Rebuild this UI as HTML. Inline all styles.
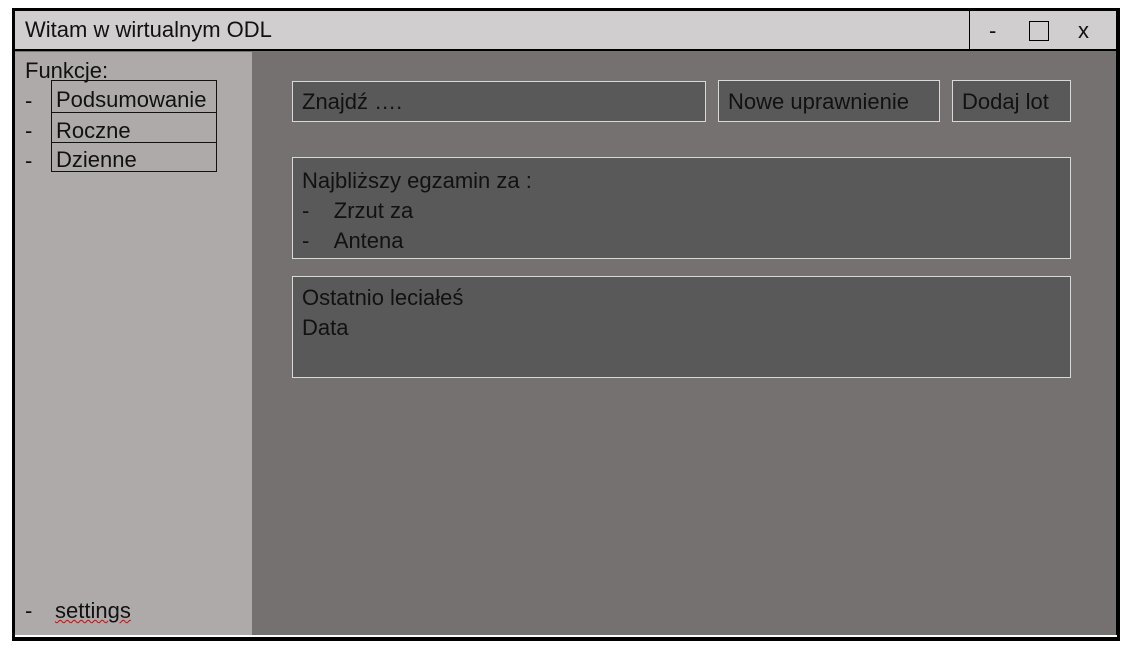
<!DOCTYPE html>
<html><head><meta charset="utf-8"><style>
*{margin:0;padding:0;box-sizing:border-box}
body{width:1131px;height:652px;background:#fff;position:relative;font-family:"Liberation Sans",sans-serif;font-size:22px;color:#111;overflow:hidden}
.a{position:absolute;line-height:26px}
.box{position:absolute;background:#595959;border:1px solid #d9d9d9;color:#111;line-height:26px}
.it{position:absolute;border:1px solid #111;left:51px;width:166px;padding-left:4px;line-height:26px;overflow:hidden;white-space:nowrap}
</style></head><body>
<div class="a" style="left:12px;top:8px;width:1108px;height:633px;border:3px solid #000;border-bottom-width:4px;background:#767171"></div>
<div class="a" style="left:15px;top:11px;width:1101px;height:40px;background:#d0cecf;border-bottom:2px solid #000"></div>
<div class="a" style="left:25px;top:17px;">Witam w wirtualnym ODL</div>
<div class="a" style="left:969px;top:11px;width:1px;height:39px;background:#000"></div>
<div class="a" style="left:989px;top:18px;">-</div>
<div class="a" style="left:1029px;top:21px;width:20px;height:20px;border:1px solid #000"></div>
<div class="a" style="left:1078px;top:18px;">x</div>
<div class="a" style="left:1116px;top:11px;width:1px;height:627px;background:#000"></div>
<div class="a" style="left:15px;top:52px;width:237px;height:583px;background:#aeaaaa"></div>
<div class="a" style="left:15px;top:635px;width:1102px;height:2px;background:#fff"></div>
<div class="a" style="left:25px;top:58px;">Funkcje:</div>
<div class="a" style="left:25px;top:88px;">-</div>
<div class="a" style="left:25px;top:118px;">-</div>
<div class="a" style="left:25px;top:148px;">-</div>
<div class="it" style="top:80px;height:33px;padding-top:6px">Podsumowanie</div>
<div class="it" style="top:112px;height:31px;padding-top:5px">Roczne</div>
<div class="it" style="top:142px;height:30px;padding-top:4px">Dzienne</div>
<div class="a" style="left:25px;top:598px;">-</div>
<div class="a" style="left:55px;top:598px;text-decoration:underline wavy #d00;text-decoration-thickness:1px">settings</div>
<div class="box" style="left:292px;top:81px;width:414px;height:41px;padding:7px 9px">Znajdź ….</div>
<div class="box" style="left:718px;top:80px;width:222px;height:42px;padding:8px 9px">Nowe uprawnienie</div>
<div class="box" style="left:952px;top:80px;width:119px;height:42px;padding:8px 9px">Dodaj lot</div>
<div class="box" style="left:292px;top:157px;width:779px;height:102px;padding:8px 9px;line-height:30px">Najbliższy egzamin za :<br>-&nbsp;&nbsp;&nbsp;&nbsp;Zrzut za<br>-&nbsp;&nbsp;&nbsp;&nbsp;Antena</div>
<div class="box" style="left:292px;top:276px;width:779px;height:102px;padding:6px 9px;line-height:30px">Ostatnio leciałeś<br>Data</div>
</body></html>
